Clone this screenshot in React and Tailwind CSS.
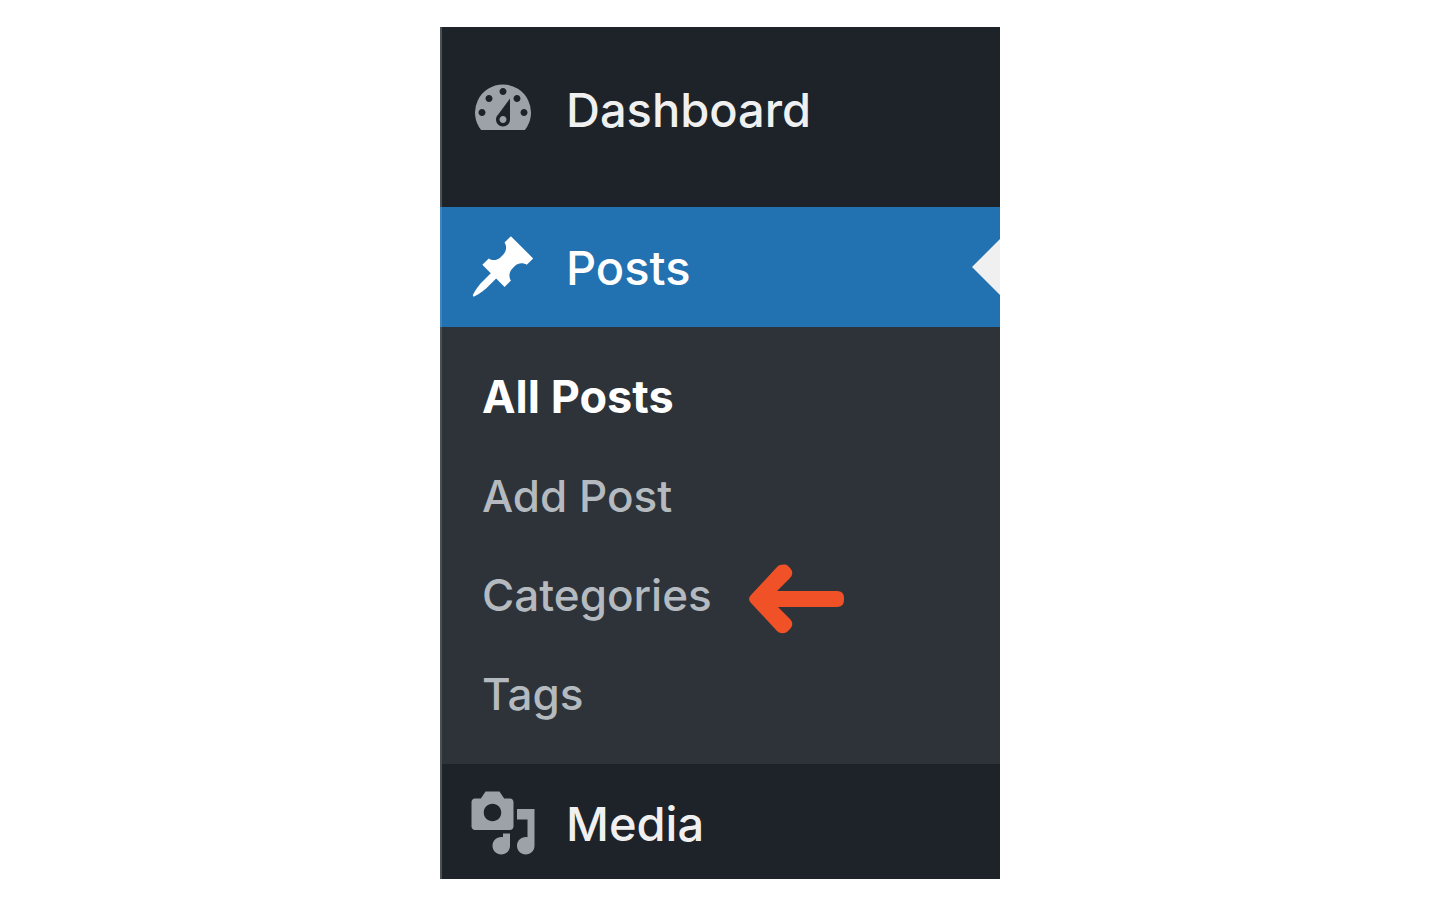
// components/AdminMenu.jsx
import React from 'react';

const DashboardIcon = () => (
  <svg viewBox="0 0 20 20" className="h-[70px] w-[70px] shrink-0 fill-[#9ca2a7]" aria-hidden="true">
    <path d="M3.76 16h12.48A7.998 7.998 0 0 0 10 3a7.998 7.998 0 0 0-6.24 13zM10 4c.55 0 1 .45 1 1s-.45 1-1 1-1-.45-1-1 .45-1 1-1zM6 6c.55 0 1 .45 1 1s-.45 1-1 1-1-.45-1-1 .45-1 1-1zm8 0c.55 0 1 .45 1 1s-.45 1-1 1-1-.45-1-1 .45-1 1-1zm-5.37 5.55L12 7v6c0 1.1-.9 2-2 2s-2-.9-2-2c0-.57.24-1.08.63-1.45zM4 10c.55 0 1 .45 1 1s-.45 1-1 1-1-.45-1-1 .45-1 1-1zm12 0c.55 0 1 .45 1 1s-.45 1-1 1-1-.45-1-1 .45-1 1-1zm-5 3c0-.55-.45-1-1-1s-1 .45-1 1 .45 1 1 1 1-.45 1-1z" />
  </svg>
);

const PinIcon = () => (
  <svg viewBox="0 0 20 20" className="h-[70px] w-[70px] shrink-0 fill-white" aria-hidden="true">
    <path d="M10.44 3.02l1.82-1.82 6.36 6.35-1.83 1.82c-1.05-.68-2.48-.57-3.41.36l-.75.75c-.92.93-1.04 2.35-.35 3.41l-1.83 1.82-2.41-2.41-2.8 2.79c-.42.42-3.38 2.71-3.8 2.29s1.86-3.39 2.28-3.81l2.79-2.79L4.1 9.36l1.83-1.82c1.05.69 2.48.57 3.4-.36l.75-.75c.93-.92 1.05-2.35.36-3.41z" />
  </svg>
);

const MediaIcon = () => (
  <svg viewBox="0 0 20 20" className="h-[70px] w-[70px] shrink-0 fill-[#9ca2a7]" aria-hidden="true">
    <path d="M13 11V4c0-.55-.45-1-1-1h-1.67L9 1H5L3.67 3H2c-.55 0-1 .45-1 1v7c0 .55.45 1 1 1h10c.55 0 1-.45 1-1zM7 4.5c1.38 0 2.5 1.12 2.5 2.5S8.38 9.5 7 9.5 4.5 8.38 4.5 7 5.62 4.5 7 4.5zM14 6h5v10.5c0 1.38-1.12 2.5-2.5 2.5S14 17.88 14 16.5s1.12-2.5 2.5-2.5c.17 0 .34.02.5.05V9h-3V6zm-4 8.05V13h2v3.5c0 1.38-1.12 2.5-2.5 2.5S7 17.88 7 16.5 8.12 14 9.5 14c.17 0 .34.02.5.05z" />
  </svg>
);

const ArrowLeft = () => (
  <svg viewBox="0 0 96 70" className="mt-2 h-[70px] w-24 shrink-0 fill-[#f05126]" aria-hidden="true">
    <path d="M3 31 29 3C32 0 38 0 40 2l2 2c3 3 3 7 0 10L29 27h60q7 0 7 7v2q0 7-7 7H30l12 12c3 3 3 7 0 10l-2 2c-3 3-8 3-11 0L3 39q-4-4 0-8z" />
  </svg>
);

const subItems = [
  { label: 'All Posts', current: true },
  { label: 'Add Post' },
  { label: 'Categories', pointed: true },
  { label: 'Tags' },
];

const MenuLink = ({ icon, label, active }) => (
  <a
    href="#"
    aria-current={active ? 'true' : undefined}
    className={
      active
        ? 'flex items-center gap-7 border-l-2 border-[#3d85bd] bg-[#2271b1] py-[25px] pl-[26px] text-[47px] leading-none font-medium text-white'
        : 'flex items-center gap-7 pl-[26px] text-[47px] leading-none font-medium text-[#f0f0f1]'
    }
  >
    {icon}
    <span>{label}</span>
    {active && (
      <svg viewBox="0 0 28 56" className="ml-auto h-14 w-7 fill-[#f0f0f1]" aria-hidden="true">
        <path d="M28 0v56L0 28z" />
      </svg>
    )}
  </a>
);

const App = () => (
  <main className="bg-white py-[27px] font-['Inter',sans-serif]">
    <nav aria-label="Admin menu" className="mx-auto w-full max-w-[560px] bg-[#1d2328]">
      <ul>
        <li className="border-l-2 border-[#4a5157] pt-[47px] pb-[63px]">
          <MenuLink icon={<DashboardIcon />} label="Dashboard" />
        </li>
        <li>
          <MenuLink icon={<PinIcon />} label="Posts" active />
          <ul className="border-l-2 border-[#4a5157] bg-[#2d3339] pt-5 pb-[21px]">
            {subItems.map((item) => (
              <li key={item.label} className="flex h-[99px] items-center gap-9 pl-10">
                <a
                  href="#"
                  className={
                    item.current
                      ? 'text-[45px] font-bold text-white'
                      : 'text-[44px] font-medium text-[#b4babf]'
                  }
                >
                  {item.label}
                </a>
                {item.pointed && <ArrowLeft />}
              </li>
            ))}
          </ul>
        </li>
        <li className="border-l-2 border-[#4a5157] pt-6 pb-[21px]">
          <MenuLink icon={<MediaIcon />} label="Media" />
        </li>
      </ul>
    </nav>
  </main>
);

export default App;
